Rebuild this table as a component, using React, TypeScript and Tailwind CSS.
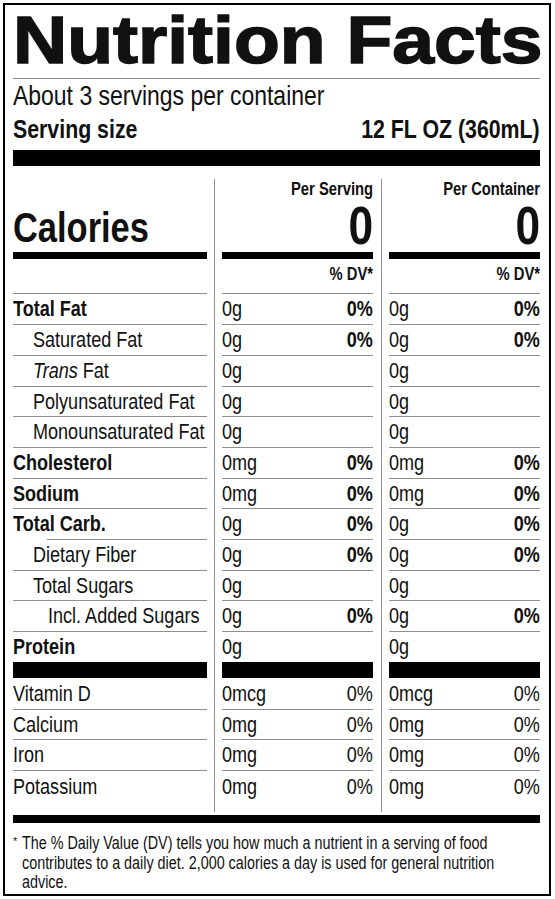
import React from 'react';

type Row = {
  label: React.ReactNode;
  bold?: boolean;
  indent?: string;
  v: string;
  dv?: string;
  h: string;
  lineIndent?: boolean;
  noLine?: boolean;
};

const rows: Row[] = [
  { label: 'Total Fat', bold: true, v: '0g', dv: '0%', h: 'h-[30px]' },
  { label: 'Saturated Fat', indent: 'pl-[20px]', v: '0g', dv: '0%', h: 'h-[30px]' },
  {
    label: (
      <>
        <i>Trans</i> Fat
      </>
    ),
    indent: 'pl-[20px]',
    v: '0g',
    h: 'h-[30px]',
  },
  { label: 'Polyunsaturated Fat', indent: 'pl-[20px]', v: '0g', h: 'h-[29px]' },
  { label: 'Monounsaturated Fat', indent: 'pl-[20px]', v: '0g', h: 'h-[30px]' },
  { label: 'Cholesterol', bold: true, v: '0mg', dv: '0%', h: 'h-[30px]' },
  { label: 'Sodium', bold: true, v: '0mg', dv: '0%', h: 'h-[29px]' },
  { label: 'Total Carb.', bold: true, v: '0g', dv: '0%', h: 'h-[30px]', lineIndent: true },
  { label: 'Dietary Fiber', indent: 'pl-[20px]', v: '0g', dv: '0%', h: 'h-[30px]' },
  { label: 'Total Sugars', indent: 'pl-[20px]', v: '0g', h: 'h-[29px]' },
  { label: 'Incl. Added Sugars', indent: 'pl-[35px]', v: '0g', dv: '0%', h: 'h-[30px]' },
  { label: 'Protein', bold: true, v: '0g', h: 'h-[30px]', noLine: true },
];

type Vit = { label: string; v: string; h: string; noLine?: boolean };
const vits: Vit[] = [
  { label: 'Vitamin D', v: '0mcg', h: 'h-[31px]' },
  { label: 'Calcium', v: '0mg', h: 'h-[29px]' },
  { label: 'Iron', v: '0mg', h: 'h-[30px]' },
  { label: 'Potassium', v: '0mg', h: 'h-[31px]', noLine: true },
];

function N({ children, right }: { children: React.ReactNode; right?: boolean }) {
  return (
    <span
      className={
        right
          ? 'inline-block origin-right scale-x-[0.82] whitespace-nowrap'
          : 'inline-block origin-left scale-x-[0.82] whitespace-nowrap'
      }
    >
      {children}
    </span>
  );
}

function Line({ indent }: { indent?: boolean }) {
  return <div className={indent ? 'h-px bg-[#8f8f8f] ml-[34px]' : 'h-px bg-[#8f8f8f]'} />;
}

function LabelColumn() {
  return (
    <div className="w-[194px] shrink-0">
      <div className="h-[86px] pt-[41px]">
        <div className="text-[42px] leading-[42px] font-bold">
          <N>Calories</N>
        </div>
      </div>
      <div className="h-[7px] bg-black" />
      <div className="h-[34px]" />
      <Line />
      {rows.map((r, i) => (
        <React.Fragment key={i}>
          <div
            className={`${r.h} flex items-center whitespace-nowrap text-[22px] leading-none ${r.indent ?? ''} ${
              r.bold ? 'font-bold' : ''
            }`}
          >
            <N>{r.label}</N>
          </div>
          {!r.noLine && <Line indent={r.lineIndent} />}
        </React.Fragment>
      ))}
      <div className="h-[16px] bg-black" />
      {vits.map((r, i) => (
        <React.Fragment key={i}>
          <div className={`${r.h} flex items-center text-[22px] leading-none`}>
            <N>{r.label}</N>
          </div>
          {!r.noLine && <Line />}
        </React.Fragment>
      ))}
    </div>
  );
}

function ValueColumn({ title }: { title: string }) {
  return (
    <div className="w-[151px] shrink-0">
      <div className="h-[86px] pt-[14px] flex flex-col items-end">
        <div className="text-[18px] leading-[18px] font-bold">
          <N right>{title}</N>
        </div>
        <div className="text-[54px] leading-[54px] font-bold">
          <N right>0</N>
        </div>
      </div>
      <div className="h-[7px] bg-black" />
      <div className="h-[34px] pt-[6px] flex justify-end">
        <div className="text-[18px] leading-[18px] font-bold">
          <N right>% DV*</N>
        </div>
      </div>
      <Line />
      {rows.map((r, i) => (
        <React.Fragment key={i}>
          <div className={`${r.h} flex items-center justify-between text-[22px] leading-none`}>
            <N>{r.v}</N>
            <span className="font-bold">{r.dv ? <N right>{r.dv}</N> : null}</span>
          </div>
          {!r.noLine && <Line />}
        </React.Fragment>
      ))}
      <div className="h-[16px] bg-black" />
      {vits.map((r, i) => (
        <React.Fragment key={i}>
          <div className={`${r.h} flex items-center justify-between text-[22px] leading-none`}>
            <N>{r.v}</N>
            <N right>0%</N>
          </div>
          {!r.noLine && <Line />}
        </React.Fragment>
      ))}
    </div>
  );
}

export default function App() {
  return (
    <div className="w-[555px] h-[899px] overflow-hidden bg-white pt-[3px] pl-[3px] text-[#111] font-['Liberation_Sans',sans-serif]">
      <div className="w-[548px] h-[893px] overflow-hidden border-2 border-black pl-[8px] pr-[9px]">
        <div className="h-[73px] pt-[1px] whitespace-nowrap">
          <span className="inline-block origin-left scale-x-[1.12] text-[67px] leading-[67px] font-bold [-webkit-text-stroke:1.5px_#111]">
            Nutrition Facts
          </span>
        </div>
        <Line />
        <div className="h-[34px] flex items-center text-[28px] leading-none">
          <N>About 3 servings per container</N>
        </div>
        <div className="h-[32px] flex items-center justify-between text-[26px] leading-none font-bold">
          <N>Serving size</N>
          <N right>12 FL OZ (360mL)</N>
        </div>
        <div className="mt-[5px] h-[16px] bg-black" />
        <div className="flex h-[646px]">
          <LabelColumn />
          <div className="w-[15px] shrink-0 pl-[7px] pt-[13px]">
            <div className="w-px h-full bg-[#8f8f8f]" />
          </div>
          <ValueColumn title="Per Serving" />
          <div className="w-[16px] shrink-0 pl-[8px] pt-[13px]">
            <div className="w-px h-full bg-[#8f8f8f]" />
          </div>
          <ValueColumn title="Per Container" />
        </div>
        <div className="mt-[3px] h-[8px] bg-black" />
        <div className="mt-[11px] flex text-[17.5px] leading-[19.5px]">
          <span className="w-[9px] shrink-0 text-[11px] leading-[14px]">*</span>
          <div className="min-w-0">
            <div>
              <N>The % Daily Value (DV) tells you how much a nutrient in a serving of food</N>
            </div>
            <div>
              <N>contributes to a daily diet. 2,000 calories a day is used for general nutrition</N>
            </div>
            <div>
              <N>advice.</N>
            </div>
          </div>
        </div>
      </div>
    </div>
  );
}
